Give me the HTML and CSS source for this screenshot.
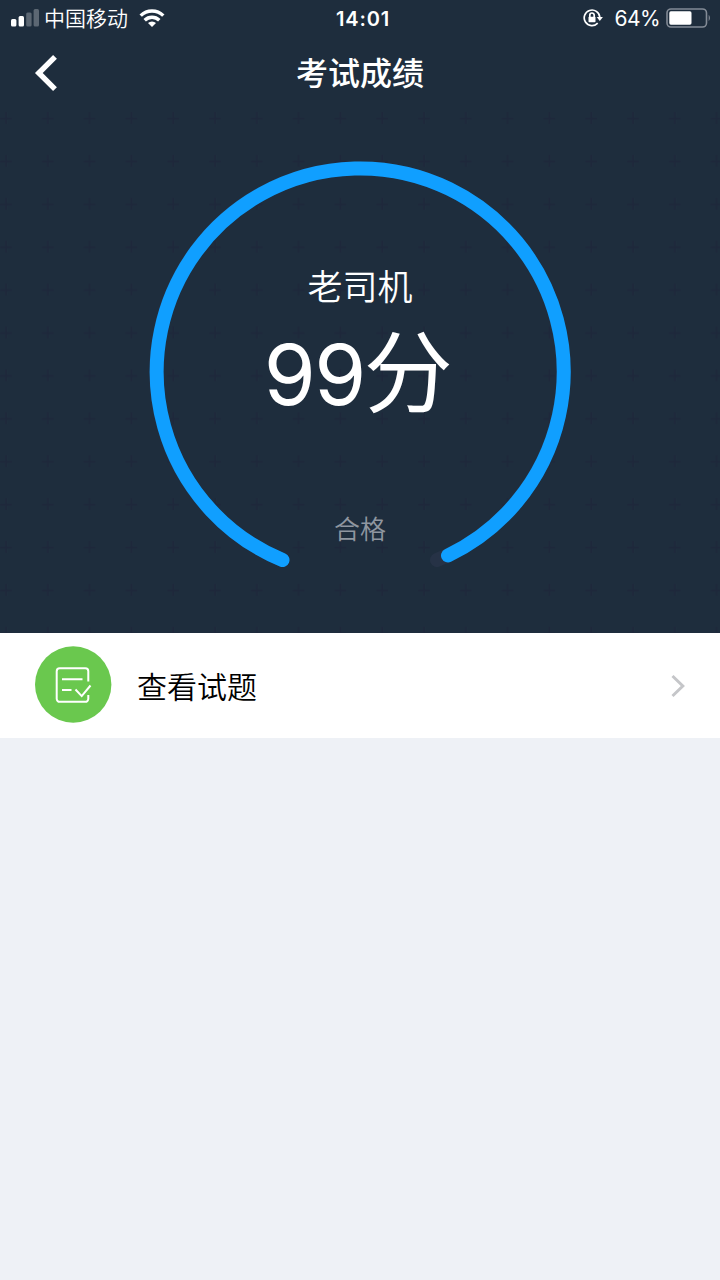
FILE: index.html
```
<!DOCTYPE html>
<html lang="zh-CN">

<head>
  <meta charset="UTF-8">
  <meta name="viewport" content="width=device-width, initial-scale=1.0">
  <title>考试成绩</title>

  <link rel="stylesheet" href="styles.css">
</head>

<body>
  <section class="hero">
    <svg class="hero-bg" width="720" height="633">
      <defs>
        <pattern id="plus" x="-15" y="97" width="41.8" height="42.9" patternUnits="userSpaceOnUse">
          <path d="M15 21.5h12M21 15v12" stroke="#1e283b" stroke-width="1.8" />
        </pattern>
      </defs>
      <rect y="100" width="720" height="533" fill="url(#plus)" />
    </svg>

    <div class="status-bar">
      <div class="status-left">
        <svg width="28" height="18" viewBox="0 0 28 18" fill="#fff">
          <rect x="0" y="10" width="5.4" height="7.4" rx="1.5" />
          <rect x="7.6" y="7" width="5.4" height="10.4" rx="1.5" />
          <rect x="15.2" y="3.6" width="5.4" height="13.8" rx="1.5" opacity=".28" />
          <rect x="22.6" y="0" width="5.4" height="17.4" rx="1.5" opacity=".28" />
        </svg>
        <span class="carrier">中国移动</span>
        <svg class="wifi" width="26" height="19" viewBox="0 0 26 19" fill="none" stroke="#fff" stroke-width="3.4">
          <path d="M1.7 6.6a16 16 0 0 1 22.6 0" />
          <path d="M5.7 11.2a10.4 10.4 0 0 1 14.6 0" />
          <path d="M13 18l-4-4a5.8 5.8 0 0 1 8 0z" fill="#fff" stroke="none" />
        </svg>
      </div>
      <div class="time">14:01</div>
      <div class="status-right">
        <svg width="21" height="18" viewBox="0 0 21 18" fill="none" stroke="#fff" stroke-width="1.7">
          <path d="M14.7 14.2A7.8 7.8 0 1 1 16.8 8.3" />
          <path d="M13.7 8h6.2l-3.1 4z" fill="#fff" stroke="none" />
          <rect x="5.5" y="7.8" width="7" height="5.4" rx=".8" fill="#fff" stroke="none" />
          <path d="M6.8 8V6.2a2.2 2.2 0 0 1 4.4 0V8" />
        </svg>
        <span class="percent">64%</span>
        <svg width="46" height="20" viewBox="0 0 46 20">
          <rect x="1" y="1" width="39.5" height="18" rx="4" fill="none" stroke="#838b96" stroke-width="1.6" />
          <rect x="3.3" y="3.3" width="22.2" height="13.4" rx="1.6" fill="#fff" />
          <path d="M42.7 6.8q2.5 3.2 0 6.4z" fill="#838b96" />
        </svg>
      </div>
    </div>

    <header class="nav">
      <svg class="back" width="24" height="38" viewBox="0 0 24 38" fill="none" stroke="#fff" stroke-width="5.4">
        <path d="M21 2.8L4.8 19 21 35.2" />
      </svg>
      <h1>考试成绩</h1>
    </header>

    <div class="gauge">
      <svg class="ring" width="422" height="422" viewBox="0 0 422 422" fill="none" stroke-width="14" stroke-linecap="round">
        <path d="M133.5 399A203.5 203.5 0 1 1 288 399" stroke="#263246" />
        <path d="M133.5 399A203.5 203.5 0 1 1 299 394.5" stroke="#109fff" />
      </svg>
      <div class="rank">老司机</div>
      <div class="score">99<span>分</span></div>
      <div class="result">合格</div>
    </div>
  </section>

  <a class="row">
    <svg width="77" height="77" viewBox="0 0 77 77" fill="none" stroke="#fff" stroke-width="2">
      <circle cx="38.2" cy="38.5" r="38.2" fill="#6ac84e" stroke="none" />
      <path d="M53.3 35.5V25.2a3 3 0 0 0-3-3H24.7a3 3 0 0 0-3 3v27.6a3 3 0 0 0 3 3h25.6a3 3 0 0 0 3-3V49" />
      <path d="M27 33.2h20.5M27 44h9.5M40.5 43.5l6.2 6.6 8.8-10.6" />
    </svg>
    <span class="label">查看试题</span>
    <svg class="arrow" width="16" height="24" viewBox="0 0 16 24" fill="none" stroke="#c5c6c9" stroke-width="3">
      <path d="M2.5 2l10.3 10L2.5 22" />
    </svg>
  </a>
</body>

</html>
```
FILE: styles.css
```
body {
  background: #eef1f6;
  font-family: Inter, "Noto Sans CJK SC", sans-serif;
  margin: 0;
}

svg {
  display: block;
  flex: none;
}

.hero {
  background: #1e2d3d;
  color: #fff;
  height: 633px;
  position: relative;
}

.hero-bg {
  left: 0;
  position: absolute;
  top: 0;
}

.status-bar,
.nav,
.gauge {
  position: relative;
}

.status-bar {
  align-items: center;
  box-sizing: border-box;
  display: grid;
  grid-template-columns: 1fr auto 1fr;
  height: 36px;
  padding: 0 8px 0 11px;
}

.status-left,
.status-right {
  align-items: center;
  display: flex;
}

.status-right {
  justify-content: flex-end;
}

.carrier {
  font-size: 21px;
  font-weight: 350;
  line-height: 34px;
  margin: 2px 11px 0 5px;
}

.time {
  font-size: 20px;
  font-weight: 600;
  letter-spacing: 0.8px;
  margin: 1px 0 0 3px;
}

.percent {
  font-size: 21px;
  letter-spacing: -0.6px;
  margin: 1px 6px 0 11px;
}

.nav {
  align-items: center;
  display: grid;
  grid-template-columns: 100px 1fr 100px;
  height: 74px;
}

.back {
  margin-left: 34px;
}

h1 {
  font-size: 32px;
  font-weight: 500;
  line-height: 72px;
  margin: 2px 0 0;
  text-align: center;
}

.gauge {
  align-items: center;
  box-sizing: border-box;
  display: flex;
  flex-direction: column;
  height: 422px;
  margin: 51px auto 0;
  padding-top: 101px;
  width: 422px;
}

.ring {
  left: 0;
  position: absolute;
  top: 0;
}

.rank {
  font-size: 35px;
  font-weight: 350;
  line-height: 50px;
}

.score {
  display: flex;
  font-size: 84px;
  letter-spacing: -1.5px;
  line-height: 110px;
  margin: 8px 5px 0 0;
}

.score span {
  font-size: 89px;
  line-height: 105px;
  margin-left: -1px;
}

.result {
  color: #8f96a0;
  font-size: 26px;
  font-weight: 350;
  line-height: 40px;
  margin-top: 80px;
}

.row {
  align-items: center;
  background: #fff;
  box-sizing: border-box;
  color: #000;
  display: flex;
  height: 105px;
  padding: 0 34px 2px 35px;
}

.label {
  flex: 1;
  font-size: 30px;
  font-weight: 350;
  margin-left: 25px;
}

.arrow {
  margin-top: 3px;
}
```
